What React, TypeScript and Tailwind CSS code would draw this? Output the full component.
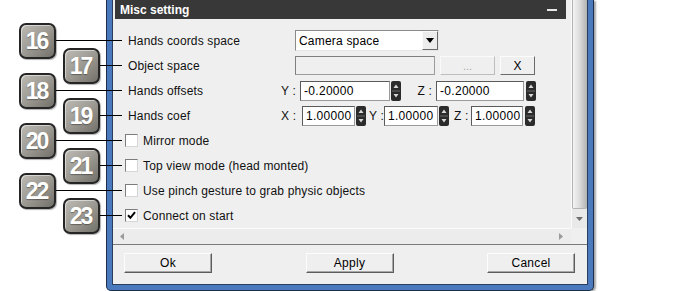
import React from "react";

const badges = [
  { n: "16", pos: "left-[19px] top-[23px]", line: "left-[56px] top-[40px] w-[66px]" },
  { n: "17", pos: "left-[63px] top-[48px]", line: "left-[100px] top-[65px] w-[22px]" },
  { n: "18", pos: "left-[19px] top-[73px]", line: "left-[56px] top-[90px] w-[66px]" },
  { n: "19", pos: "left-[63px] top-[98px]", line: "left-[100px] top-[115px] w-[22px]" },
  { n: "20", pos: "left-[19px] top-[123px]", line: "left-[56px] top-[140px] w-[66px]" },
  { n: "21", pos: "left-[63px] top-[148px]", line: "left-[100px] top-[165px] w-[22px]" },
  { n: "22", pos: "left-[19px] top-[173px]", line: "left-[56px] top-[190px] w-[66px]" },
  { n: "23", pos: "left-[63px] top-[198px]", line: "left-[100px] top-[215px] w-[22px]" },
];

function Spinner({ cls }: { cls: string }) {
  return (
    <svg className={`${cls} shrink-0`} width="10" height="20" viewBox="0 0 10 20">
      <rect x="0" y="0" width="10" height="20" rx="2" fill="#2b2b2b" />
      <line x1="1" y1="10" x2="9" y2="10" stroke="#6a6a6a" strokeWidth="1" />
      <polygon points="2.5,7 7.5,7 5,3.5" fill="#d8d8d8" />
      <polygon points="2.5,13 7.5,13 5,16.5" fill="#d8d8d8" />
    </svg>
  );
}

function Field({ cls, value }: { cls: string; value: string }) {
  return (
    <div
      className={`${cls} shrink-0 h-[20px] bg-white border border-t-[#5a5a5a] border-l-[#5a5a5a] border-b-[#9a9a9a] border-r-[#9a9a9a] flex items-center pl-[3px] text-[12px] tracking-[0.3px] text-black whitespace-nowrap overflow-hidden`}
    >
      {value}
    </div>
  );
}

function Check({ checked }: { checked?: boolean }) {
  return (
    <div className="w-[13px] h-[13px] shrink-0 bg-white border border-t-[#7c7c7c] border-l-[#7c7c7c] border-b-[#d6d6d6] border-r-[#d6d6d6] flex items-center justify-center">
      {checked && (
        <svg width="9" height="9" viewBox="0 0 9 9">
          <path d="M1 4.2 L3.4 6.8 L8 1.2" fill="none" stroke="#000" strokeWidth="2" />
        </svg>
      )}
    </div>
  );
}

function Btn({ label }: { label: string }) {
  return (
    <div className="w-[88px] h-[20px] flex items-center justify-center bg-[#efefef] border border-t-[#fcfcfc] border-l-[#fcfcfc] border-b-[#5c5c5c] border-r-[#5c5c5c] shadow-[inset_-1px_-1px_0_#a8a8a8] text-[12px] tracking-[0.3px] text-black">
      {label}
    </div>
  );
}

export default function App() {
  const label = "shrink-0 whitespace-nowrap text-[12px] tracking-[0.15px] text-[#111]";
  return (
    <div className="relative w-[700px] h-[291px] bg-white overflow-hidden font-['Liberation_Sans',Arial,sans-serif]">
      {/* window */}
      <div className="ml-[106px] w-[488px] h-[291px] border-x border-b border-[#1c2e4a] rounded-b-[5px] bg-[#4a79bd] px-[5px] pb-[5px] shadow-[2px_1px_2px_rgba(0,0,0,0.35)]">
        <div className="h-full border-x border-b border-[#2a3d5c] bg-[#efefef] flex flex-col">
          <div className="h-[228px] flex">
            {/* panel */}
            <div className="flex-1 flex flex-col">
              <div className="ml-[2px] w-[451px] h-[19px] bg-[#383838] flex items-center justify-between pl-[5px] pr-[9px]">
                <span className="text-white font-bold text-[12px]">Misc setting</span>
                <div className="w-[10px] h-[2px] bg-[#e8e8e8]" />
              </div>
              <div className="mt-[9px] flex flex-col">
                <div className="h-[25px] flex items-center pl-[15px]">
                  <div className={`w-[167px] ${label}`}>Hands coords space</div>
                  <div className="w-[144px] h-[21px] shrink-0 flex bg-white border border-t-[#8a8a8a] border-l-[#8a8a8a] border-b-[#e6e6e6] border-r-[#e6e6e6]">
                    <div className="flex-1 flex items-center pl-[3px] text-[12px] tracking-[0.2px] text-black">Camera space</div>
                    <div className="w-[16px] h-full bg-[#ececec] border border-t-[#fafafa] border-l-[#fafafa] border-b-[#6a6a6a] border-r-[#6a6a6a] flex items-center justify-center">
                      <svg width="8" height="5" viewBox="0 0 8 5">
                        <polygon points="0,0 8,0 4,5" fill="#000" />
                      </svg>
                    </div>
                  </div>
                </div>
                <div className="h-[25px] flex items-center pl-[15px]">
                  <div className={`w-[167px] ${label}`}>Object space</div>
                  <div className="w-[140px] h-[19px] shrink-0 bg-[#efefef] border border-t-[#7e7e7e] border-l-[#7e7e7e] border-b-[#9c9c9c] border-r-[#9c9c9c]" />
                  <div className="ml-[5px] w-[55px] h-[19px] shrink-0 flex items-end justify-center pb-[2px] bg-[#efefef] border border-t-[#fafafa] border-l-[#fafafa] border-b-[#bdbdbd] border-r-[#bdbdbd] text-[11px] leading-none text-[#a8a8a8]">...</div>
                  <div className="ml-[5px] w-[35px] h-[19px] shrink-0 flex items-center justify-center bg-[#efefef] border border-t-[#fcfcfc] border-l-[#fcfcfc] border-b-[#6a6a6a] border-r-[#6a6a6a] text-[12px] text-black">X</div>
                </div>
                <div className="h-[25px] flex items-center pl-[15px]">
                  <div className={`w-[152px] ${label}`}>Hands offsets</div>
                  <div className={`w-[20px] pl-px ${label}`}>Y :</div>
                  <Field cls="w-[90px]" value="-0.20000" />
                  <Spinner cls="ml-px" />
                  <div className={`w-[35px] text-right pr-[4px] ${label}`}>Z :</div>
                  <Field cls="w-[88px]" value="-0.20000" />
                  <Spinner cls="ml-[2px]" />
                </div>
                <div className="h-[25px] flex items-center pl-[15px]">
                  <div className={`w-[152px] ${label}`}>Hands coef</div>
                  <div className={`w-[22px] pl-px ${label}`}>X :</div>
                  <Field cls="w-[53px]" value="1.00000" />
                  <Spinner cls="ml-px" />
                  <div className={`w-[18px] pl-[3px] ${label}`}>Y :</div>
                  <Field cls="w-[54px]" value="1.00000" />
                  <Spinner cls="ml-px" />
                  <div className={`w-[22px] pl-[5px] ${label}`}>Z :</div>
                  <Field cls="w-[52px]" value="1.00000" />
                  <Spinner cls="ml-[2px]" />
                </div>
                <div className="h-[25px] flex items-center pl-[12px]">
                  <Check />
                  <span className={`ml-[5px] ${label}`}>Mirror mode</span>
                </div>
                <div className="h-[25px] flex items-center pl-[12px]">
                  <Check />
                  <span className={`ml-[5px] ${label}`}>Top view mode (head monted)</span>
                </div>
                <div className="h-[25px] flex items-center pl-[12px]">
                  <Check />
                  <span className={`ml-[5px] ${label}`}>Use pinch gesture to grab physic objects</span>
                </div>
                <div className="h-[25px] flex items-center pl-[12px]">
                  <Check checked />
                  <span className={`ml-[5px] ${label}`}>Connect on start</span>
                </div>
              </div>
            </div>
            {/* vertical scrollbar */}
            <div className="w-[16px] flex flex-col bg-[#e9e9e9] border-l border-[#fafafa]">
              <div className="flex-1 rounded-b-[2px] border-x border-b border-[#b4b4b4] bg-linear-to-r from-[#f4f4f4] via-[#dcdcdc] to-[#b8b8b8]" />
              <div className="h-[19px] flex items-center justify-center">
                <svg width="7" height="4" viewBox="0 0 7 4">
                  <polygon points="0,0 7,0 3.5,4" fill="#6e6e6e" />
                </svg>
              </div>
            </div>
          </div>
          {/* horizontal scrollbar */}
          <div className="h-[16px] flex">
            <div className="flex-1 bg-[#ececec] border-t border-[#fbfbfb] flex items-center justify-between pl-[7px] pr-[8px]">
              <svg width="4" height="7" viewBox="0 0 4 7">
                <polygon points="4,0 4,7 0,3.5" fill="#9a9a9a" />
              </svg>
              <svg width="4" height="7" viewBox="0 0 4 7">
                <polygon points="0,0 0,7 4,3.5" fill="#9a9a9a" />
              </svg>
            </div>
            <div className="w-[16px] bg-[#efefef]" />
          </div>
          <div className="h-px bg-[#7a7a7a]" />
          <div className="flex-1 flex justify-between items-start pt-[8px] pl-[11px] pr-[12px]">
            <Btn label="Ok" />
            <Btn label="Apply" />
            <Btn label="Cancel" />
          </div>
        </div>
      </div>

      {/* annotations */}
      {badges.map((b) => (
        <div key={"l" + b.n} className={`absolute h-px bg-black ${b.line}`} />
      ))}
      {badges.map((b) => (
        <div
          key={b.n}
          className={`absolute ${b.pos} w-[37px] h-[36px] rounded-[7px] border-2 border-[#252525] bg-linear-to-br from-[#bdbbb4] via-[#9c9a92] to-[#72706a] shadow-[inset_1px_1px_0_rgba(255,255,255,0.5),1px_1px_1px_rgba(0,0,0,0.3)] flex items-center justify-center text-white font-bold text-[23px] tracking-[-2px] pr-[2px] [text-shadow:0_1px_1px_rgba(0,0,0,0.35)]`}
        >
          {b.n}
        </div>
      ))}
    </div>
  );
}
